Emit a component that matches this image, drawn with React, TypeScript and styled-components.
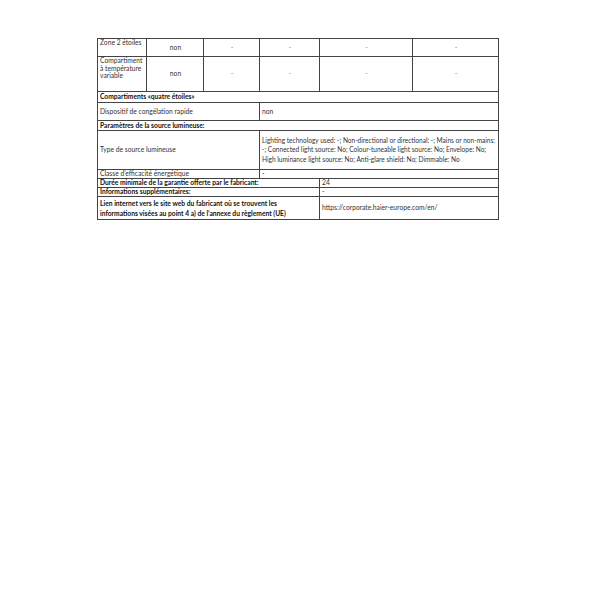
import React from "react";
import styled, { createGlobalStyle } from "styled-components";

const GlobalStyle = createGlobalStyle`
  html, body { margin: 0; padding: 0; background: #ffffff; }
`;

const Page = styled.div`
  width: 600px;
  height: 600px;
  box-sizing: border-box;
  padding: 38px 0 0 97px;
  background: #fff;
`;

const Table = styled.table`
  width: 401px;
  border-collapse: collapse;
  table-layout: fixed;
  font-family: "Lato", "Liberation Sans", sans-serif;
  color: #333;
`;

const Col = styled.col<{ $w: number }>`
  width: ${(p) => p.$w}px;
`;

const Row = styled.tr<{ $h: number }>`
  height: ${(p) => p.$h}px;
`;

const Cell = styled.td<{ $center?: boolean; $top?: boolean; $bold?: boolean; $lh?: number; $size?: number }>`
  border: 1px solid #444;
  padding: 0 1px 0 2px;
  font-size: ${(p) => p.$size ?? 6.7}px;
  line-height: ${(p) => p.$lh ?? 1.15};
  font-weight: ${(p) => (p.$bold ? 700 : 400)};
  color: ${(p) => (p.$bold ? "#111" : "#333")};
  text-align: ${(p) => (p.$center ? "center" : "left")};
  vertical-align: ${(p) => (p.$top ? "top" : "middle")};
  white-space: nowrap;
`;

const Dash = styled.span`
  color: #888;
`;

const widths = [49, 57, 56, 60, 93, 86];
const dash = "-";

function DashCells() {
  return (
    <>
      {[0, 1, 2, 3].map((i) => (
        <Cell key={i} $center>
          <Dash>{dash}</Dash>
        </Cell>
      ))}
    </>
  );
}

export default function App() {
  return (
    <>
      <GlobalStyle />
      <Page>
        <Table>
          <colgroup>
            {widths.map((w, i) => (
              <Col key={i} $w={w} />
            ))}
          </colgroup>
          <tbody>
            <Row $h={18}>
              <Cell $top>Zone 2 étoiles</Cell>
              <Cell $center>non</Cell>
              <DashCells />
            </Row>
            <Row $h={35}>
              <Cell $top $lh={1.12}>
                Compartiment
                <br />à température
                <br />variable
              </Cell>
              <Cell $center>non</Cell>
              <DashCells />
            </Row>
            <Row $h={11}>
              <Cell colSpan={6} $bold>Compartiments «quatre étoiles»</Cell>
            </Row>
            <Row $h={18}>
              <Cell colSpan={3}>Dispositif de congélation rapide</Cell>
              <Cell colSpan={3}>non</Cell>
            </Row>
            <Row $h={10}>
              <Cell colSpan={6} $bold>Paramètres de la source lumineuse:</Cell>
            </Row>
            <Row $h={39}>
              <Cell colSpan={3}>Type de source lumineuse</Cell>
              <Cell colSpan={3} $lh={1.4} $size={6.55}>
                Lighting technology used: -; Non-directional or directional: -; Mains or non-mains:
                <br />-; Connected light source: No; Colour-tuneable light source: No; Envelope: No;
                <br />High luminance light source: No; Anti-glare shield: No; Dimmable: No
              </Cell>
            </Row>
            <Row $h={9}>
              <Cell colSpan={3}>Classe d’efficacité énergétique</Cell>
              <Cell colSpan={3}>{dash}</Cell>
            </Row>
            <Row $h={9}>
              <Cell colSpan={4} $bold>Durée minimale de la garantie offerte par le fabricant:</Cell>
              <Cell colSpan={2}>24</Cell>
            </Row>
            <Row $h={9}>
              <Cell colSpan={4} $bold>Informations supplémentaires:</Cell>
              <Cell colSpan={2}>{dash}</Cell>
            </Row>
            <Row $h={23}>
              <Cell colSpan={4} $bold $lh={1.5}>
                Lien internet vers le site web du fabricant où se trouvent les
                <br />informations visées au point 4 a) de l’annexe du règlement (UE)
              </Cell>
              <Cell colSpan={2}>https://corporate.haier-europe.com/en/</Cell>
            </Row>
          </tbody>
        </Table>
      </Page>
    </>
  );
}
